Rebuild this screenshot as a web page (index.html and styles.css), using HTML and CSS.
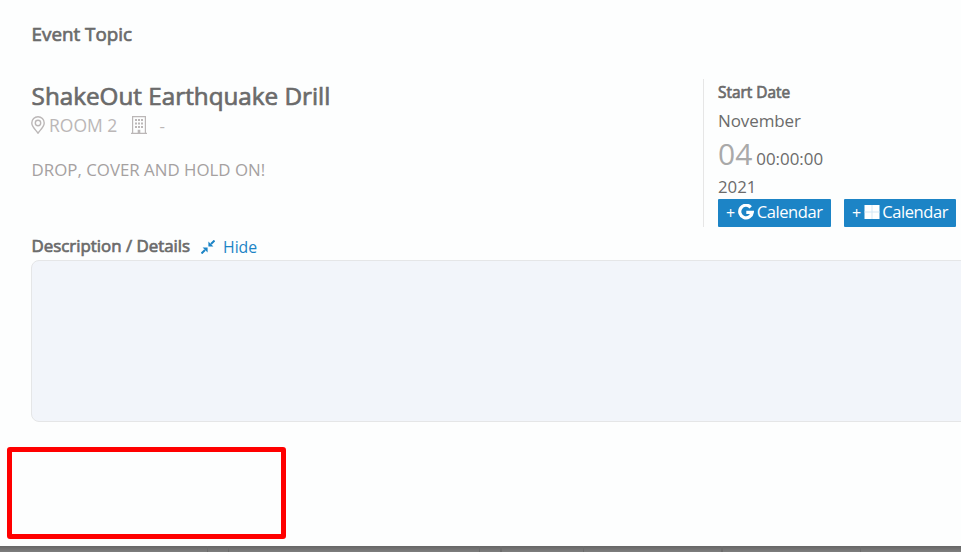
FILE: index.html
```html
<!DOCTYPE html>
<html>
  <head>
    <meta charset="utf-8">
    <title>Event Topic</title>
    <link rel="stylesheet" href="styles.css">
  </head>
  <body>

    <div class="modal-box">
      <h4 class="modal-title">Event Topic</h4>

      <div class="event-row">
        <div class="event-info">
          <h2>ShakeOut Earthquake Drill</h2>
          <div class="location">
            <svg class="pin" viewBox="0 0 14 18" width="14" height="18">
              <path d="M7 17.2C5.6 14.6 0.8 11.200 0.800 7A6.200 6.200 0 0 1 13.200 7C13.200 11.200 8.400 14.600 7 17.200Z"/>
              <circle cx="7" cy="7" r="2.700"/>
            </svg>
            <span class="room">ROOM 2</span>
            <svg class="building" viewBox="0 0 16 18" width="16" height="18">
              <path class="line" d="M0 17.400H16M1.600 17.400V0.600H14.400V17.400"/>
              <path d="M4 3h2v2h-2zM7 3h2v2h-2zM10 3h2v2h-2zM4 6.500h2v2h-2zM7 6.500h2v2h-2zM10 6.500h2v2h-2zM4 10h2v2h-2zM7 10h2v2h-2zM10 10h2v2h-2zM6.700 13.800h2.600v3.600h-2.600z"/>
            </svg>
            <span class="dash">-</span>
          </div>
          <p class="summary">DROP, COVER AND HOLD ON!</p>
        </div>

        <div class="event-date">
          <div class="label">Start Date</div>
          <div class="month">November</div>
          <div class="day"><span class="num">04</span> <span class="time">00:00:00</span></div>
          <div class="year">2021</div>
          <div class="buttons">
            <a class="btn btn-google"><span>+</span>
              <svg viewBox="0 0 16 16" width="16" height="16">
                <path class="g" d="M12.700 3.300A6.300 6.300 0 1 0 14.300 8.300H8.300"/>
              </svg>
              <span class="cal">Calendar</span></a>
            <a class="btn btn-windows"><span>+</span>
              <svg viewBox="0 0 16 16" width="16" height="16">
                <rect class="pane" x="0.500" y="1" width="15" height="14"/>
                <path class="split" d="M8 1V15M0.500 8H15.500"/>
              </svg>
              <span class="cal">Calendar</span></a>
          </div>
        </div>
      </div>

      <div class="details-head">
        <span class="details-title">Description / Details</span>
        <a class="hide">
          <svg viewBox="0 0 14 14" width="14" height="14">
            <path class="stem" d="M0.500 13.500L4 10M13.500 0.500L10 4"/>
            <path d="M1.600 7.400H6.600V12.400ZM7.400 1.600V6.600H12.400Z"/>
          </svg>
          <span>Hide</span>
        </a>
      </div>
      <div class="details"></div>
    </div>

    <!-- calendar grid behind the dialog -->
    <div class="backdrop">
      <i></i><i></i><i></i><i class="wide"></i><i></i><i class="wide"></i><i></i>
    </div>

    <div class="highlight"></div>

  </body>
</html>
```

FILE: styles.css
```css
body {
    margin: 0;
    height: 552px;
    overflow: hidden;
    background: #7d7d7d;
    color: #6b6b6b;
    font-family: "Open Sans", sans-serif;
    font-size: 17px;
}

.modal-box {
    box-sizing: border-box;
    height: 546px;
    padding: 21px 0 0 31px;
    background: #fdfefe;
}

h2, h4, .label, .details-title {
    margin: 0;
    font-weight: 400;
    -webkit-text-stroke: 0.7px #6b6b6b;
}

h2, h4, .details-title, .summary {
    padding-left: 0.6px;
}

.modal-title {
    font-size: 18.8px;
    line-height: 26px;
}

.event-row {
    display: flex;
    height: 148px;
    margin-top: 32px;
}

.event-info {
    width: 672px;
}

h2 {
    font-size: 24.25px;
    line-height: 34px;
}

.location {
    display: flex;
    align-items: center;
    height: 24px;
    color: #bbb7b7;
}

.pin {
    fill: none;
    stroke: #bbb7b7;
    stroke-width: 1.400;
}

.room {
    width: 69px;
    margin: -1px 13px 0 4px;
    font-size: 17.5px;
    line-height: 22px;
    white-space: nowrap;
}

.building {
    fill: #bbb7b7;
}

.building .line {
    fill: none;
    stroke: #bbb7b7;
    stroke-width: 1.200;
}

.dash {
    margin-left: 12.5px;
}

.summary {
    margin: 21px 0 0;
    color: #a5a1a1;
    font-size: 16.85px;
    line-height: 24px;
}

.event-date {
    box-sizing: border-box;
    flex: 1;
    padding-left: 14px;
    border-left: 1px solid #e6e6e6;
}

.label {
    padding-top: 1px;
    font-size: 15.4px;
    line-height: 26px;
}

.month {
    line-height: 30px;
    letter-spacing: -0.1px;
}

.day {
    height: 39px;
    line-height: 36px;
    white-space: nowrap;
}

.num {
    color: #a9a9a9;
    font-size: 30px;
}

.time {
    margin-left: -0.5px;
    font-size: 16.9px;
}

.year {
    height: 24px;
    font-size: 16.8px;
    line-height: 24px;
}

.buttons {
    display: flex;
    gap: 13px;
}

.btn {
    box-sizing: border-box;
    display: flex;
    align-items: center;
    width: 113px;
    height: 28px;
    padding: 0 8px 1px;
    border-radius: 1px;
    background: #1c84c6;
    color: #fff;
    font-size: 16px;
    white-space: nowrap;
}

.btn-windows {
    width: 112px;
}

.btn svg {
    flex-shrink: 0;
    margin: 0 3px 1px;
}

.cal {
    margin: 0 0 2px -0.5px;
    font-size: 16.5px;
    letter-spacing: -0.4px;
}

.btn-windows .cal {
    margin-left: -1px;
}

.g {
    fill: none;
    stroke: #fff;
    stroke-width: 3.200;
}

.pane {
    fill: #fff;
}

.split {
    stroke: #d5e7f4;
    stroke-width: 1;
}

.details-head {
    display: flex;
    height: 33px;
    line-height: 37px;
}

.details-title {
    width: 169.4px;
    font-size: 16.85px;
}

.hide {
    display: flex;
    align-items: center;
    height: 40px;
    color: #1c84c6;
    font-size: 15.8px;
}

.hide svg {
    margin-right: 8px;
    fill: #1c84c6;
}

.stem {
    stroke: #1c84c6;
    stroke-width: 2;
}

.details {
    box-sizing: border-box;
    width: 960px;
    height: 162px;
    border: 1px solid #e5e6e7;
    border-radius: 8px;
    background: #f2f5fa;
}

.backdrop {
    display: flex;
    height: 6px;
    background: linear-gradient(#666, #7e7e7e);
}

.backdrop i {
    width: 1px;
    background: #6c6c6c;
    margin-left: 207px;
}

.backdrop i:nth-child(2) { margin-left: 20px; }
.backdrop i:nth-child(3) { margin-left: 250px; }
.backdrop i:nth-child(4) { margin-left: 20px; }
.backdrop i:nth-child(5) { margin-left: 81px; }
.backdrop i:nth-child(6) { margin-left: 137px; }
.backdrop i:nth-child(7) { margin-left: 137px; }

.backdrop .wide {
    width: 2px;
}

.highlight {
    position: absolute;
    box-sizing: border-box;
    left: 7px;
    top: 447px;
    width: 279px;
    height: 92px;
    border: 5px solid #f00;
    border-radius: 3px;
}
```
